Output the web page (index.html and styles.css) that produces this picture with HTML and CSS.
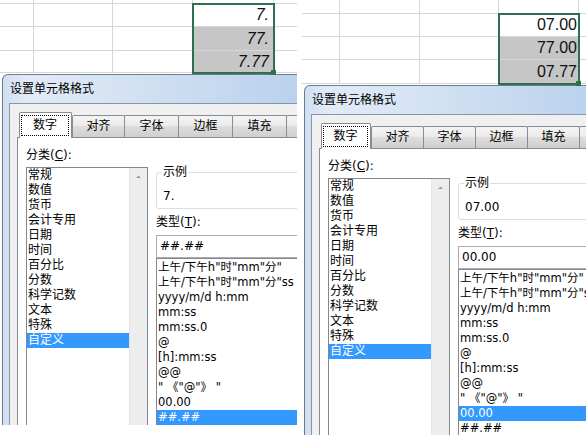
FILE: index.html
```html
<!DOCTYPE html>
<html lang="zh-CN">
<head>
<meta charset="utf-8">
<title>设置单元格格式</title>
<link rel="stylesheet" href="styles.css">
</head>
<body>
<div class="page">
  <section class="shot shot-a">
    <div class="sheet sheet-a">
      <div class="cell"></div><div class="cell"></div><div class="cell"></div><div class="cell"></div><div class="cell end"></div>
      <div class="cell"></div><div class="cell"></div><div class="cell"></div><div class="cell end"></div>
      <div class="cell"></div><div class="cell"></div><div class="cell"></div><div class="cell end"></div>
      <div class="cell"></div><div class="cell"></div><div class="cell"></div><div class="cell end"></div>
      <div class="cell val r2">7.</div>
      <div class="cell val r3 shade">77.</div>
      <div class="cell val r4 shade">7.77</div>
      <div class="sel"><span class="handle"></span></div>
    </div>
    <div class="dialog">
      <div class="titlebar">设置单元格格式</div>
      <div class="client">
        <div class="tabs">
          <div class="tab active"><span class="focus">数字</span></div>
          <div class="tab">对齐</div>
          <div class="tab">字体</div>
          <div class="tab">边框</div>
          <div class="tab">填充</div>
          <div class="tab">保护</div>
        </div>
        <div class="panel">
          <div class="catcol">
            <div class="label">分类(<u>C</u>):</div>
            <div class="catlist">
              <ul class="items">
                <li>常规</li><li>数值</li><li>货币</li><li>会计专用</li><li>日期</li><li>时间</li>
                <li>百分比</li><li>分数</li><li>科学记数</li><li>文本</li><li>特殊</li><li class="on">自定义</li>
              </ul>
              <div class="vscroll"><svg class="arrow" width="17" height="17" viewBox="0 0 17 17"><polygon points="6,10 8.5,7.5 11,10" fill="#9a9a9a"/></svg></div>
            </div>
          </div>
          <div class="fmtcol">
            <div class="group"><div class="legend">示例</div><div class="sample">7.</div></div>
            <div class="label">类型(<u>T</u>):</div>
            <div class="textbox">##.##</div>
            <ul class="typelist">
              <li>上午/下午h"时"mm"分"</li>
              <li>上午/下午h"时"mm"分"ss</li>
              <li>yyyy/m/d h:mm</li>
              <li>mm:ss</li>
              <li>mm:ss.0</li>
              <li>@</li>
              <li>[h]:mm:ss</li>
              <li>@@</li>
              <li>" 《"@"》 "</li>
              <li>00.00</li>
              <li class="on">##.##</li>
            </ul>
          </div>
        </div>
      </div>
    </div>
  </section>

  <section class="shot shot-b">
    <div class="sheet sheet-b">
      <div class="cell"></div><div class="cell"></div><div class="cell"></div><div class="cell"></div><div class="cell end"></div>
      <div class="cell"></div><div class="cell"></div><div class="cell"></div><div class="cell end"></div>
      <div class="cell"></div><div class="cell"></div><div class="cell"></div><div class="cell end"></div>
      <div class="cell"></div><div class="cell"></div><div class="cell"></div><div class="cell end"></div>
      <div class="cell val r2">07.00</div>
      <div class="cell val r3 shade">77.00</div>
      <div class="cell val r4 shade">07.77</div>
      <div class="sel"><span class="handle"></span></div>
    </div>
    <div class="dialog">
      <div class="titlebar">设置单元格格式</div>
      <div class="client">
        <div class="tabs">
          <div class="tab active"><span class="focus">数字</span></div>
          <div class="tab">对齐</div>
          <div class="tab">字体</div>
          <div class="tab">边框</div>
          <div class="tab">填充</div>
          <div class="tab">保护</div>
        </div>
        <div class="panel">
          <div class="catcol">
            <div class="label">分类(<u>C</u>):</div>
            <div class="catlist">
              <ul class="items">
                <li>常规</li><li>数值</li><li>货币</li><li>会计专用</li><li>日期</li><li>时间</li>
                <li>百分比</li><li>分数</li><li>科学记数</li><li>文本</li><li>特殊</li><li class="on">自定义</li>
              </ul>
              <div class="vscroll"><svg class="arrow" width="17" height="17" viewBox="0 0 17 17"><polygon points="6,10 8.5,7.5 11,10" fill="#9a9a9a"/></svg></div>
            </div>
          </div>
          <div class="fmtcol">
            <div class="group"><div class="legend">示例</div><div class="sample">07.00</div></div>
            <div class="label">类型(<u>T</u>):</div>
            <div class="textbox">00.00</div>
            <ul class="typelist">
              <li>上午/下午h"时"mm"分"</li>
              <li>上午/下午h"时"mm"分"ss</li>
              <li>yyyy/m/d h:mm</li>
              <li>mm:ss</li>
              <li>mm:ss.0</li>
              <li>@</li>
              <li>[h]:mm:ss</li>
              <li>@@</li>
              <li>" 《"@"》 "</li>
              <li class="on">00.00</li>
              <li>##.##</li>
            </ul>
          </div>
        </div>
      </div>
    </div>
  </section>
</div>
</body>
</html>
```

FILE: styles.css
```css
* { box-sizing: border-box; }
html, body { margin: 0; padding: 0; background: #fff; }

.page { display: flex; width: 586px; height: 441px; overflow: hidden; background: #fff; }
.shot { flex: none; overflow: hidden; }
.shot-a { width: 297px; height: 425px; }
.shot-b { width: 284px; height: 435px; margin-left: 5px; }

/* spreadsheet */
.sheet { display: grid; align-content: start; }
.sheet-a { height: 74px; grid-template-columns: 34px 79px 80px 81px 1fr; grid-template-rows: 4px 23px 24px 22px; }
.sheet-b { height: 85px; grid-template-columns: 38px 80px 79px 80px 1fr; grid-template-rows: 14px 23px 23px 24px; }
.cell { border-right: 1px solid #d6d6d6; border-bottom: 1px solid #d6d6d6; }
.cell.end { border-right: 0; }
.val { grid-column: 4; display: flex; align-items: center; justify-content: flex-end; font: 16px "Liberation Sans", Arial, sans-serif; color: #111; }
.r2 { grid-row: 2; }
.r3 { grid-row: 3; }
.r4 { grid-row: 4; }
.sheet-a .val { padding-right: 4px; font-style: italic; }
.sheet-b .val { padding-right: 1px; }
.shade { background: #c6c6c6; }
.sel { grid-column: 4; grid-row: 2 / span 3; margin: -1px; border: 2px solid #2f6f4e; position: relative; z-index: 1; }
.handle { position: absolute; right: -3px; bottom: -3px; width: 5px; height: 5px; background: #2f6f4e; }

/* dialog */
.dialog {
  width: 400px;
  margin-left: 2px;
  border: 1px solid #6e7b8a;
  border-bottom: 0;
  border-radius: 6px 6px 0 0;
  background: linear-gradient(90deg, #cfdff2 0, #e2ebf7 24px, #bad2ed 290px);
  font: 12px/15px "DejaVu Sans", "Noto Sans CJK SC", sans-serif;
  color: #000;
}
.titlebar { height: 28px; line-height: 28px; padding-left: 7px; white-space: nowrap; }
.client { margin: 0 6px; border: 1px solid #8795a5; border-bottom: 0; background: #f0f0f0; padding: 8px 0 0 7px; }

.tabs { display: flex; align-items: flex-end; height: 25px; padding-left: 2px; position: relative; z-index: 1; }
.tab {
  flex: none;
  width: 55px;
  height: 22px;
  margin-left: -1px;
  border: 1px solid #898c95;
  border-bottom: 0;
  border-radius: 2px 2px 0 0;
  background: linear-gradient(#f4f4f4, #ebebeb 45%, #dddddd 50%, #cfcfcf);
  display: flex;
  align-items: center;
  justify-content: center;
  white-space: nowrap;
}
.tab.active { display: block; width: 53px; height: 26px; margin: 0 0 -1px 0; background: #fff; }
.tab.active + .tab { width: 53px; margin-left: 0; }
.shot-b .tab { width: 53px; }
.shot-b .tab.active { width: 50px; }
.focus { display: block; margin: 2px 2px 0 1px; height: 21px; border: 1px dotted #000; line-height: 19px; text-align: center; }

.panel { display: flex; gap: 8px; height: 330px; border: 1px solid #898c95; border-bottom: 0; background: #fff; padding: 10px 8px 0; }

.label { height: 15px; margin-bottom: 4px; white-space: nowrap; }
.catcol { flex: none; width: 122px; }
.catlist { display: flex; height: 300px; border: 1px solid #828790; }
.items { list-style: none; margin: 0; padding: 0; width: 102px; flex: none; }
.items li { height: 15px; padding-left: 1px; white-space: nowrap; }
.items li.on, .typelist li.on { background: #3399ff; color: #fff; }
.vscroll { flex: none; width: 18px; background: #ededed; border-left: 1px solid #e4e4e4; }
.arrow { display: block; }

.fmtcol { flex: 1; min-width: 0; }
.group { margin-top: 24px; height: 37px; border: 1px solid #d5dfe5; border-radius: 3px; padding-left: 6px; background: #fff; }
.legend { width: fit-content; height: 15px; margin: -8px 0 0 -1px; padding: 0 1px; background: #fff; }
.sample { height: 15px; margin-top: 9px; }
.fmtcol .label { margin: 6px 0 5px; }
.textbox { height: 23px; border: 1px solid #abadb3; padding-left: 3px; line-height: 21px; background: #fff; }
.typelist { list-style: none; margin: 0; padding: 1px 0 0; height: 200px; border: 1px solid #828790; font-size: 11.5px; }
.typelist li { height: 15px; line-height: 15px; padding-left: 1px; white-space: nowrap; }
```
